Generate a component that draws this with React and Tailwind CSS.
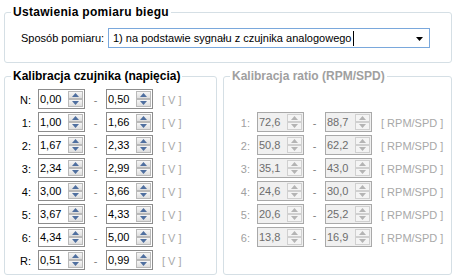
import React from "react";

const leftRows = [
  ["N:", "0,00", "0,50"],
  ["1:", "1,00", "1,66"],
  ["2:", "1,67", "2,33"],
  ["3:", "2,34", "2,99"],
  ["4:", "3,00", "3,66"],
  ["5:", "3,67", "4,33"],
  ["6:", "4,34", "5,00"],
  ["R:", "0,51", "0,99"],
];

const rightRows = [
  ["1:", "72,6", "88,7"],
  ["2:", "50,8", "62,2"],
  ["3:", "35,1", "43,0"],
  ["4:", "24,6", "30,0"],
  ["5:", "20,6", "25,2"],
  ["6:", "13,8", "16,9"],
];

// small up / down arrow for the spinner buttons
const Arrow = ({ up, disabled }) => (
  <svg width="7" height="4" viewBox="0 0 7 4">
    <path
      d={up ? "M0 4 L3.5 0 L7 4 Z" : "M0 0 L7 0 L3.5 4 Z"}
      fill={disabled ? "#b4b4b4" : "#4f6f9f"}
    />
  </svg>
);

const Spinner = ({ value, disabled }) => (
  <div
    className={`relative flex h-[20px] w-[47px] items-center border ${
      disabled ? "border-[#a9a9a9] bg-[#f0f0f0] text-[#6d6d6d]" : "border-[#8c8c8c] bg-white text-black"
    }`}
  >
    <span className="pl-[1px] leading-none">{value}</span>
    <div className="absolute right-[1px] top-[1px] flex flex-col">
      {[true, false].map((up) => (
        <div
          key={up ? "u" : "d"}
          className={`flex h-[8px] w-[15px] items-center justify-center border ${
            disabled
              ? "border-[#d0d0d0] bg-[#f4f4f4]"
              : "border-[#b9b9b9] bg-gradient-to-b from-[#f6f6f6] to-[#dedede]"
          }`}
        >
          <Arrow up={up} disabled={disabled} />
        </div>
      ))}
    </div>
  </div>
);

const Row = ({ label, a, b, unit, disabled }) => (
  <div className="flex h-[23px] items-start">
    <span className={`w-[26px] pt-[3px] text-right ${disabled ? "text-[#a0a0a0]" : "text-black"}`}>
      {label}
    </span>
    <div className="ml-[7px]">
      <Spinner value={a} disabled={disabled} />
    </div>
    <span className="w-[21px] pt-[3px] text-center text-[#808080]">-</span>
    <Spinner value={b} disabled={disabled} />
    <span className="ml-[9px] pt-[3px] text-[#a8a8a8]">{unit}</span>
  </div>
);

export default function App() {
  return (
    <div
      className="h-[278px] w-[457px] bg-white px-[4px] pt-[5px] text-[11px] text-black"
      style={{ fontFamily: '"Liberation Sans", Arial, sans-serif' }}
    >
      <fieldset className="h-[58px] w-[448px] rounded-[3px] border border-[#d5dfe5]">
        <legend className="ml-[6px] px-[2px] text-[12px] font-bold leading-[14px] tracking-[0.3px]">
          Ustawienia pomiaru biegu
        </legend>
        <div className="mt-[9px] flex items-center">
          <span className="ml-[16px] w-[87px]">Sposób pomiaru:</span>
          <div className="relative flex h-[20px] w-[322px] items-center border border-[#7aa8dc] bg-white pl-[4px]">
            <span>1) na podstawie sygnału z czujnika analogowego</span>
            <span className="ml-[1px] h-[15px] w-[1px] bg-black" />
            <svg className="absolute right-[6px] top-[8px]" width="7" height="4" viewBox="0 0 7 4">
              <path d="M0 0 L7 0 L3.5 4 Z" fill="#000" />
            </svg>
          </div>
        </div>
      </fieldset>

      <div className="mt-[6px] flex gap-[6px]">
        <fieldset className="h-[206px] w-[213px] rounded-[3px] border border-[#d5dfe5]">
          <legend className="ml-[6px] px-[2px] text-[12px] font-bold leading-[14px]">
            Kalibracja czujnika (napięcia)
          </legend>
          <div className="mt-[6px] flex flex-col">
            {leftRows.map(([l, a, b]) => (
              <Row key={l} label={l} a={a} b={b} unit="[ V ]" />
            ))}
          </div>
        </fieldset>

        <fieldset className="h-[206px] w-[229px] rounded-[3px] border border-[#d5dfe5]">
          <legend className="ml-[6px] px-[2px] text-[12px] font-bold leading-[14px] text-[#a0a0a0]">
            Kalibracja ratio (RPM/SPD)
          </legend>
          <div className="mt-[29px] flex flex-col">
            {rightRows.map(([l, a, b]) => (
              <Row key={l} label={l} a={a} b={b} unit="[ RPM/SPD ]" disabled />
            ))}
          </div>
        </fieldset>
      </div>
    </div>
  );
}
